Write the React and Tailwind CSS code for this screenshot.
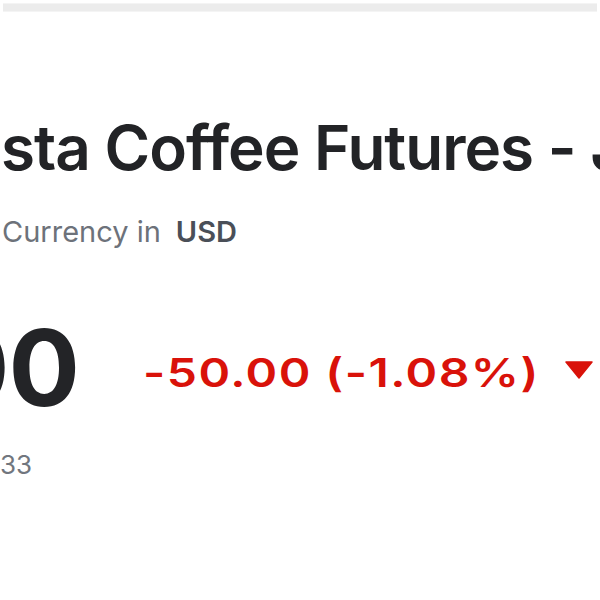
import React from 'react';

// text that runs off the left edge: the hidden part sits in a zero-width box and overflows leftwards
function Clip({ children, className = '' }) {
  return <span className={`w-0 flex justify-end shrink-0 ${className}`}>{children}</span>;
}

export default function App() {
  return (
    <div className="w-[600px] h-[600px] overflow-hidden bg-white" style={{ fontFamily: 'Inter, "Liberation Sans", sans-serif' }}>
      <div className="mx-[3px] mt-[3px] h-[9px] bg-[#ececec] border-y border-[#f4f4f4]" />

      <div className="whitespace-nowrap">
        <h1 className="mt-[105px] ml-[1px] flex text-[62px] leading-none font-semibold text-[#222326] tracking-[-1px]">
          <Clip>Robu</Clip>
          <span>sta Coffee Futures - Jul 24</span>
        </h1>

        <div className="mt-[38px] ml-[2px] flex items-baseline text-[29px] leading-none text-[#6d727a]">
          <Clip>NY Mercantile - Delayed Quote •&nbsp;</Clip>
          <span>Currency in</span>
          <span className="ml-[15px] font-semibold text-[#4a4f58]">USD</span>
        </div>

        <div className="mt-[69px] flex items-start">
          <div className="ml-[-62px] flex text-[106px] leading-none font-bold text-[#232427] tracking-[-1px]">
            <Clip>4,580.</Clip>
            <span>00</span>
          </div>
          <div className="ml-[64px] mt-[38px] w-[395px] shrink-0">
            <span className="inline-block origin-left scale-x-[1.2] text-[40px] leading-none font-semibold text-[#d9120a] tracking-[1.2px]">
              -50.00 (-1.08%)
            </span>
          </div>
          <svg className="ml-[27px] mt-[46px] shrink-0" width="28" height="18" viewBox="0 0 28 18">
            <path d="M1 1 L27 1 L14 17 Z" fill="#d9120a" stroke="#d9120a" strokeWidth="1.5" strokeLinejoin="round" />
          </svg>
        </div>

        <div className="mt-[31px] flex text-[26px] leading-none text-[#71767e]">
          <Clip>As of 11:</Clip>
          <span>33</span>
        </div>
      </div>
    </div>
  );
}
